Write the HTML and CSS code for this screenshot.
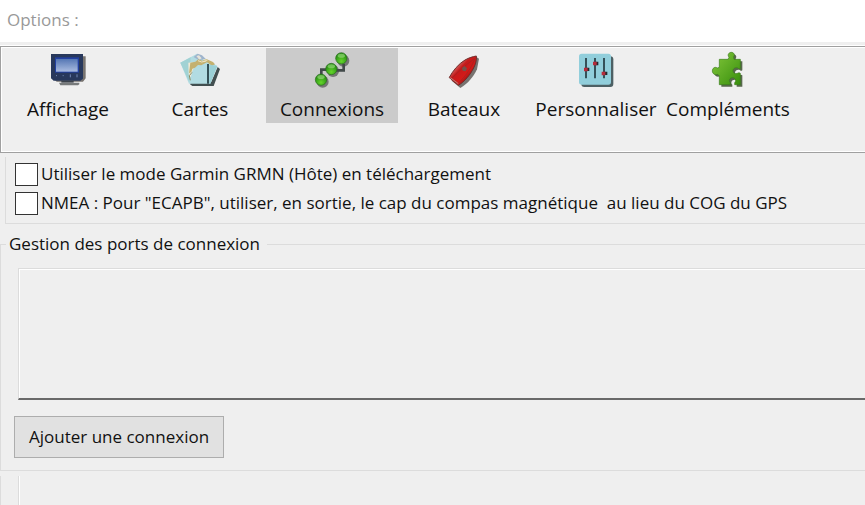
FILE: index.html
```html
<!DOCTYPE html>
<html lang="fr">

<head>
    <meta charset="UTF-8">
    <meta name="viewport" content="width=device-width, initial-scale=1.0">
    <title>Options</title>
    <link rel="stylesheet" href="styles.css">
</head>

<body>
    <header class="titlebar">
        <h1>Options :</h1>
    </header>

    <nav class="toolbar">
        <button type="button" class="tab">
            <svg class="icon" viewBox="24 6 120 120">
                <defs>
                    <linearGradient id="screen" x1="0" y1="0" x2="0" y2="1">
                        <stop offset="0" stop-color="#5577b4"/>
                        <stop offset="1" stop-color="#a9bbe0"/>
                    </linearGradient>
                </defs>
                <path d="M128 25h9v66l-8 10H50l-8-8h86z" fill="#77736f"/>
                <path d="M33 18h96v74l-8 6H41l-8-7z" fill="#28385c"/>
                <path d="M45 28h72v46H45z" fill="#2240a0"/>
                <path d="M48 33h65v38H48z" fill="url(#screen)"/>
                <path d="M48 83h3M68 83h3M91 79v9M111 79v9" stroke="#7186b4" stroke-width="3"/>
                <path d="M64 98h37v6H64z" fill="#3c434c"/>
                <path d="M57 104h61v5l-4 3H61z" fill="#777a7b"/>
            </svg>
            <span>Affichage</span>
        </button>
        <button type="button" class="tab">
            <svg class="icon" viewBox="30 6 120 120">
                <path d="M63 103l-3 6 7 5h64l19-51-7-6-19 44z" fill="#424f50"/>
                <path d="M31 44L81 17l61 37-21 53H57z" fill="#b2dce2"/>
                <path d="M31 44l31-16-4 74z" fill="#a1d2d4"/>
                <path d="M71 27l12-10 13 5 12 12-22 2z" fill="#9eb4cc"/>
                <path d="M79 24l8-2 8 9-7 4z" fill="#e6e4da"/>
                <path d="M55 44l16-1 2 14-6 12-4 16-5 6-2-14z" fill="#f0ead6"/>
                <path d="M61 44l15-3 9-7 12 4 12-5 20 9 6 7-9 4-15-10-17 9-10-1-9 8-8 3-3 10-7 4z" fill="#c4b170"/>
                <path d="M84 38l11 4 14-3M100 35l12 2" fill="none" stroke="#f1e7c7" stroke-width="3"/>
                <path d="M66 73l-8 10 3 14" fill="none" stroke="#8b8e66" stroke-width="3"/>
                <path d="M111 48h6v59h-6z" fill="#335056"/>
                <path d="M118 50l24 4-21 53h-3z" fill="#9bd0d6"/>
            </svg>
            <span>Cartes</span>
        </button>
        <button type="button" class="tab active">
            <svg class="icon" viewBox="21 6 120 120">
                <defs>
                    <radialGradient id="ball" cx=".5" cy=".75" r=".65">
                        <stop offset="0" stop-color="#65d52b"/>
                        <stop offset="1" stop-color="#248c11"/>
                    </radialGradient>
                    <filter id="soft" x="-20%" y="-20%" width="150%" height="150%">
                        <feGaussianBlur stdDeviation="2"/>
                    </filter>
                </defs>
                <g fill="#777" filter="url(#soft)">
                    <circle cx="53" cy="101" r="18"/>
                    <circle cx="84" cy="69" r="18"/>
                    <circle cx="115" cy="38" r="18"/>
                </g>
                <path d="M49 82V65h32M89 67h27V47" fill="none" stroke="#424a4a" stroke-width="8"/>
                <g fill="url(#ball)" stroke="#2a6b20" stroke-width="2">
                    <circle cx="48" cy="95" r="17"/>
                    <circle cx="79" cy="63" r="17"/>
                    <circle cx="109" cy="31" r="17"/>
                </g>
                <g fill="#a0df83" opacity=".6">
                    <ellipse cx="48" cy="87" rx="11" ry="6"/>
                    <ellipse cx="79" cy="55" rx="11" ry="6"/>
                    <ellipse cx="109" cy="23" rx="11" ry="6"/>
                </g>
            </svg>
            <span>Connexions</span>
        </button>
        <button type="button" class="tab">
            <svg class="icon" viewBox="27 6 120 120">
                <defs>
                    <linearGradient id="hull" x1="0" y1="0" x2="1" y2="1">
                        <stop offset=".25" stop-color="#d98580"/>
                        <stop offset=".42" stop-color="#c51b1b"/>
                        <stop offset=".62" stop-color="#d51a18"/>
                        <stop offset=".8" stop-color="#741512"/>
                    </linearGradient>
                </defs>
                <path d="M50 98l26 22c22-12 40-34 50-56l6-32-8-5z" fill="#77736f" filter="url(#soft)"/>
                <path d="M43 88c11-20 27-40 47-52 12-7 23-10 34-12 1 12-2 24-8 36-10 20-27 41-46 52-3-3-24-18-27-24z" fill="url(#hull)" stroke="#702e2c" stroke-width="3"/>
                <path d="M51 90c18-18 40-38 68-59M70 105c22-21 39-45 49-72" fill="none" stroke="#9b2523" stroke-width="2"/>
                <path d="M81 60l7-6 8 7-4 9-9-2z" fill="#75534a"/>
                <path d="M46 89l24 18" stroke="#b7827b" stroke-width="3"/>
            </svg>
            <span>Bateaux</span>
        </button>
        <button type="button" class="tab">
            <svg class="icon" viewBox="33 6 120 120">
                <rect x="49" y="25" width="96" height="92" rx="9" fill="#4d6064"/>
                <rect x="42" y="17" width="96" height="93" rx="8" fill="#91cedb"/>
                <path d="M63 30v61M90 30v61M117 30v61" stroke="#355159" stroke-width="6"/>
                <path d="M66 59h7v10h-7zM92 41h8v11h-8zM119 71h8v10h-8z" fill="#26282e"/>
                <path d="M57 59h11v11H57zM84 41h11v11H84zM110 71h11v11h-11z" fill="#b62c3c"/>
            </svg>
            <span>Personnaliser</span>
        </button>
        <button type="button" class="tab">
            <svg class="icon" viewBox="24 6 120 120">
                <defs>
                    <linearGradient id="piece" x1="0" y1="0" x2="1" y2="1">
                        <stop offset="0" stop-color="#84c83c"/>
                        <stop offset="1" stop-color="#388f0c"/>
                    </linearGradient>
                    <path id="puzzle" d="M58 34h26l3-6c-6-8 0-15 7-15s12 7 7 13l1 8h19v27l-4 2c-5-7-18-4-18 5 0 8 8 11 18 6l4 2v34h-17v-6c6-5 2-15-6-15-9 0-13 9-7 15v6H58V84l-5-5c-7 4-16-2-16-10 0-9 8-14 15-9l6-2z"/>
                </defs>
                <use href="#puzzle" x="6" y="6" fill="#58684d"/>
                <use href="#puzzle" fill="url(#piece)" stroke="#397c1b" stroke-width="2"/>
            </svg>
            <span>Compléments</span>
        </button>
    </nav>

    <main>
        <section class="settings">
            <label class="check"><input type="checkbox"> Utiliser le mode Garmin GRMN (Hôte) en téléchargement</label>
            <label class="check"><input type="checkbox"> NMEA : Pour "ECAPB", utiliser, en sortie, le cap du compas magnétique&nbsp; au lieu du COG du GPS</label>
        </section>

        <fieldset class="ports">
            <legend>Gestion des ports de connexion</legend>
            <div class="port-list"></div>
            <button type="button" class="add">Ajouter une connexion</button>
        </fieldset>

        <section class="details">
            <div class="details-inner"></div>
        </section>
    </main>
</body>

</html>
```
FILE: styles.css
```css
* {
    box-sizing: border-box;
}

body {
    display: flex;
    flex-direction: column;
    min-height: 100vh;
    margin: 0;
    background-color: #efefef;
    color: #111;
    font-family: "Segoe UI", "Open Sans", sans-serif;
    font-size: 17px;
    line-height: 24px;
}

button {
    color: inherit;
    font: inherit;
}

.titlebar {
    padding: 8px 7px 10px;
    background-color: #fff;
}

.titlebar h1 {
    margin: 0;
    color: #999;
    font-size: 17px;
    font-weight: normal;
}

.toolbar {
    display: flex;
    align-items: flex-start;
    height: 107px;
    margin-top: 4px;
    padding: 1px;
    border: 1px solid #a0a0a0;
    border-right: none;
    box-shadow: inset 1px 1px #fff, 0 -1px #fff, inset 0 -1px #fff;
}

.tab {
    display: flex;
    flex-direction: column;
    align-items: center;
    gap: 7px;
    width: 132px;
    height: 75px;
    padding: 2px 0;
    border: none;
    background: none;
    font-size: 19px;
    white-space: nowrap;
}

.tab.active {
    background-color: #cbcbcb;
}

.icon {
    width: 40px;
    height: 40px;
}

main {
    display: flex;
    flex-direction: column;
    flex: 1;
}

.settings {
    display: flex;
    flex-direction: column;
    gap: 5px;
    margin: 4px 0 0 5px;
    padding: 5px 9px 8px;
    border-bottom: 1px solid #dcdcdc;
    border-left: 1px solid #dcdcdc;
}

.check {
    display: flex;
    align-items: center;
    gap: 3px;
    white-space: nowrap;
}

.check input {
    flex: none;
    width: 23px;
    height: 23px;
    margin: 0;
    border: 1px solid #333;
    background-color: #fff;
    appearance: none;
}

.check input:checked {
    background-color: #333;
}

.ports {
    min-width: 0;
    margin: 8px 0 0;
    padding: 12px 0 12px 13px;
    border: 1px solid #dcdcdc;
    border-right: none;
}

.ports legend {
    margin-left: -8px;
    padding: 0 7px 0 3px;
}

.port-list {
    height: 132px;
    margin: 0 0 16px 4px;
    border-top: 1px solid #dcdcdc;
    border-bottom: 2px solid #696969;
    border-left: 1px solid #dcdcdc;
    box-shadow: inset 1px 1px #fff;
}

.add {
    display: block;
    height: 42px;
    padding: 0 14px;
    border: 1px solid #adadad;
    background-color: #e1e1e1;
}

.details {
    display: flex;
    flex: 1;
    margin-top: 5px;
    padding-left: 17px;
    border-left: 1px solid #dcdcdc;
}

.details-inner {
    flex: 1;
    border-left: 1px solid #dcdcdc;
    box-shadow: inset 1px 0 #fff;
}
```
